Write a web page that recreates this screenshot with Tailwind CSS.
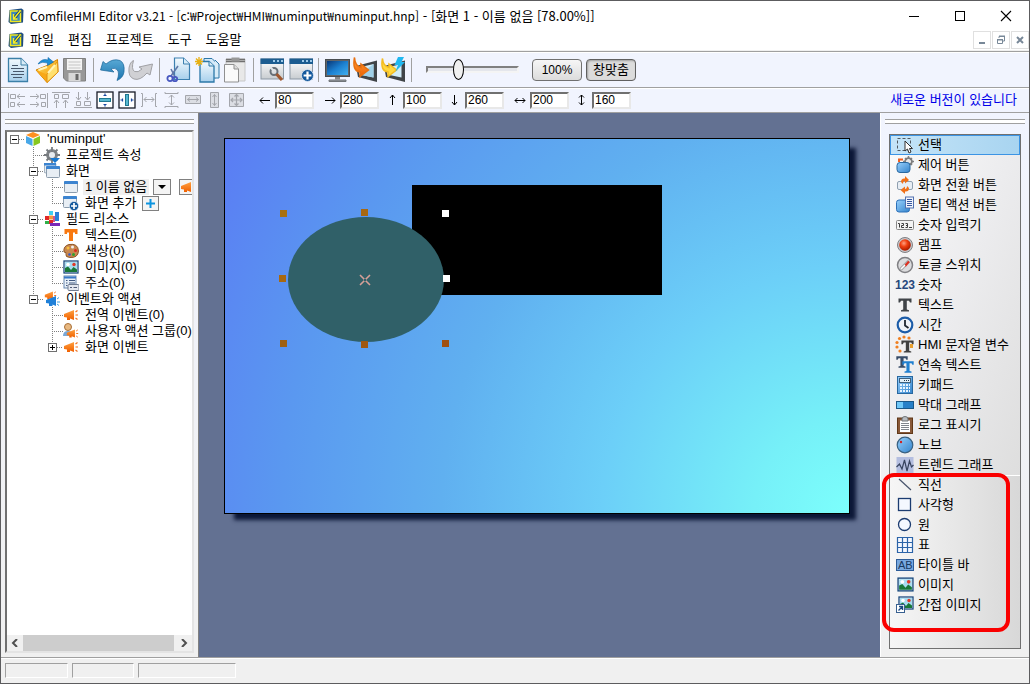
<!DOCTYPE html>
<html lang="ko">
<head>
  <meta charset="utf-8">
  <meta name="viewport" content="width=device-width, initial-scale=1">
  <title>ComfileHMI Editor v3.21</title>
  <script src="https://cdn.jsdelivr.net/npm/@tailwindcss/browser@4"></script>
</head>
<body class="h-screen overflow-hidden bg-[#f0f0f0] text-[13px] leading-4 text-black font-['Liberation_Sans','Noto_Sans_CJK_KR',sans-serif]">

<!-- shared icons -->
<svg class="absolute h-0 w-0" aria-hidden="true">
  <defs>
    <linearGradient id="g-blue" x1="0" y1="0" x2="1" y2="1"><stop offset="0" stop-color="#98d0fc"/><stop offset="1" stop-color="#3484cc"/></linearGradient>
    <linearGradient id="g-page" x1="0" y1="0" x2="0" y2="1"><stop offset="0" stop-color="#f4fafe"/><stop offset="1" stop-color="#a8d0ec"/></linearGradient>
    <linearGradient id="g-gray" x1="0" y1="0" x2="0" y2="1"><stop offset="0" stop-color="#ffffff"/><stop offset="1" stop-color="#c8ccd0"/></linearGradient>
    <linearGradient id="g-orange" x1="0" y1="0" x2="0" y2="1"><stop offset="0" stop-color="#ffa040"/><stop offset="1" stop-color="#f06000"/></linearGradient>
    <linearGradient id="g-gold" x1="0" y1="0" x2="1" y2="1"><stop offset="0" stop-color="#ffe060"/><stop offset="1" stop-color="#f09000"/></linearGradient>
    <linearGradient id="g-screen" x1="0" y1="0" x2="1" y2="1"><stop offset="0" stop-color="#083878"/><stop offset=".5" stop-color="#1c80d0"/><stop offset="1" stop-color="#40b0f0"/></linearGradient>
    <linearGradient id="g-undo" x1="0" y1="0" x2="0" y2="1"><stop offset="0" stop-color="#58a8d4"/><stop offset="1" stop-color="#1c74b0"/></linearGradient>
    <radialGradient id="g-red" cx=".4" cy=".35" r=".6"><stop offset="0" stop-color="#ffa080"/><stop offset=".5" stop-color="#f04010"/><stop offset="1" stop-color="#b02000"/></radialGradient>
  </defs>
  <symbol id="t-line" viewBox="0 0 19 16"><path d="M8.500 0V16" stroke="#808080" stroke-dasharray="1 1"/></symbol>
  <symbol id="t-tee" viewBox="0 0 19 16"><path d="M8.500 0V16M10 8.500H19" stroke="#808080" stroke-dasharray="1 1"/></symbol>
  <symbol id="t-end" viewBox="0 0 19 16"><path d="M8.500 0V8M8 8.500H19" stroke="#808080" stroke-dasharray="1 1"/></symbol>
  <symbol id="t-root" viewBox="0 0 19 16"><path d="M13 8.500H19" stroke="#808080" stroke-dasharray="1 1"/><rect x="4.500" y="4.500" width="8" height="8" fill="#fff" stroke="#707070"/><path d="M6 8.500h5" stroke="#000"/></symbol>
  <symbol id="t-minus" viewBox="0 0 19 16"><path d="M8.500 0V16M13 8.500H19" stroke="#808080" stroke-dasharray="1 1"/><rect x="4.500" y="4.500" width="8" height="8" fill="#fff" stroke="#707070"/><path d="M6 8.500h5" stroke="#000"/></symbol>
  <symbol id="t-minus-end" viewBox="0 0 19 16"><path d="M8.500 0V4M13 8.500H19" stroke="#808080" stroke-dasharray="1 1"/><rect x="4.500" y="4.500" width="8" height="8" fill="#fff" stroke="#707070"/><path d="M6 8.500h5" stroke="#000"/></symbol>
  <symbol id="t-plus-end" viewBox="0 0 19 16"><path d="M8.500 0V4M13 8.500H19" stroke="#808080" stroke-dasharray="1 1"/><rect x="4.500" y="4.500" width="8" height="8" fill="#fff" stroke="#707070"/><path d="M6 8.500h5M8.500 6v5" stroke="#000"/></symbol>

  <symbol id="i-app" viewBox="0 0 16 16">
    <path d="M1.500 2L13.500 .5L15.500 2L15 14.500L3 16L.5 14Z" fill="#1c4c80"/>
    <path d="M2.500 3H12.500V13.500H2.500Z" fill="#3c88b8" stroke="#f0e820" stroke-width="1.500"/>
    <path d="M6 10.500L12 3" stroke="#18406c" stroke-width="3"/><path d="M6 10.500L12.500 2.500M5.500 6v5h4" fill="none" stroke="#f8f020" stroke-width="1.300"/>
  </symbol>
  <symbol id="i-win" viewBox="0 0 16 16"><rect x="1.500" y="2.500" width="13" height="11" rx="1" fill="#e8eef4" stroke="#8c9cac"/><path d="M1 3q0-1 1-1h12q1 0 1 1v2H1Z" fill="#3c84d0"/></symbol>
  <symbol id="i-horn" viewBox="0 0 16 16"><path d="M1 7L11 3V13L7 11.500V13H4V10.500L1 10Z" fill="url(#g-orange)"/><path d="M12.500 5l2-1.500M12.500 8H15M12.500 11l2 1.500" stroke="#f07020" stroke-width="1.200"/></symbol>
  <symbol id="i-pic" viewBox="0 0 16 16"><rect x="1" y="2" width="14" height="12" fill="#fff" stroke="#1c4c80" stroke-width="1.300"/><rect x="2" y="3" width="12" height="10" fill="#a8dcf0"/><circle cx="11" cy="5.500" r="1.700" fill="#e03828"/><circle cx="5" cy="5.500" r="1.800" fill="#fff"/><path d="M2 13V9L5 7.500L8 11L10.500 8L14 10.500V13Z" fill="#187838"/></symbol>
  <symbol id="i-badge" viewBox="0 0 10 10"><circle cx="5" cy="5" r="4.600" fill="#14589c" stroke="#e8f0f8" stroke-width=".6"/><path d="M5 2v6M2 5h6" stroke="#fff" stroke-width="1.700"/></symbol>
  <symbol id="i-tt" viewBox="0 0 16 16"><path d="M1.500 1.500H14.500V5.500H13L12 3.800H9.800V12.500L12 13.200V14.500H4V13.200L6.200 12.500V3.800H4L3 5.500H1.500Z"/></symbol>
</svg>

<div class="flex h-full flex-col border border-[#5c5c5e]">

  <!-- title bar -->
  <header class="flex h-[29px] shrink-0 items-center bg-white pl-[7px] font-['Noto_Sans_CJK_KR',sans-serif]">
    <svg class="h-4 w-4"><use href="#i-app"/></svg>
    <h1 class="ml-1.5 whitespace-pre text-xs">ComfileHMI Editor v3.21 - [c:₩Project₩HMI₩numinput₩numinput.hnp]<span class="text-[13px]"> - [화면 1 - 이름 없음 [78.00%]]</span></h1>
    <div class="ml-auto flex">
      <button class="flex h-7 w-[46px] items-center justify-center" aria-label="최소화"><svg class="h-3 w-3" viewBox="0 0 12 12"><path d="M1 6.500H11" stroke="#000"/></svg></button>
      <button class="flex h-7 w-[46px] items-center justify-center" aria-label="최대화"><svg class="h-3 w-3" viewBox="0 0 12 12"><rect x="1.500" y="1.500" width="9" height="9" fill="none" stroke="#000"/></svg></button>
      <button class="flex h-7 w-[46px] items-center justify-center" aria-label="닫기"><svg class="h-3 w-3" viewBox="0 0 12 12"><path d="M1 1L11 11M11 1L1 11" stroke="#000" stroke-width="1.100"/></svg></button>
    </div>
  </header>

  <!-- menu -->
  <nav class="flex h-5 shrink-0 items-center bg-white pl-[7px]">
    <svg class="mr-1.5 h-4 w-4"><use href="#i-app"/></svg>
    <a href="#" class="mr-3.5">파일</a>
    <a href="#" class="mr-3.5">편집</a>
    <a href="#" class="mr-3.5">프로젝트</a>
    <a href="#" class="mr-3.5">도구</a>
    <a href="#">도움말</a>
    <div class="ml-auto flex gap-px">
      <button class="flex h-[18px] w-[18px] items-center justify-center border border-[#e0e0e0]" aria-label="창 최소화"><svg class="h-2.5 w-2.5" viewBox="0 0 10 10"><path d="M2 8H8" stroke="#788898" stroke-width="2"/></svg></button>
      <button class="flex h-[18px] w-[18px] items-center justify-center border border-[#e0e0e0]" aria-label="창 복원"><svg class="h-2.5 w-2.5" viewBox="0 0 10 10" fill="none" stroke="#788898"><path d="M3 3V1.500H9M3 1H9M8.500 1V6H7M1.500 4V8.500H6.500V4M1 4.500H7M1 5H7"/></svg></button>
      <button class="flex h-[18px] w-[18px] items-center justify-center border border-[#e0e0e0]" aria-label="창 닫기"><svg class="h-2.5 w-2.5" viewBox="0 0 10 10"><path d="M2 2L8 8M8 2L2 8" stroke="#788898" stroke-width="2"/></svg></button>
    </div>
  </nav>

  <!-- main toolbar -->
  <div class="mt-px flex h-9 shrink-0 items-center border-t border-[#a0a0a0] bg-[#f1f4fe] pl-1.5 shadow-[inset_0_1px_0_#fff]">
    <button class="mr-[3px]" aria-label="새로 만들기"><svg class="h-[26px] w-[25px]" viewBox="0 0 25 26"><path d="M1.500 1.500H14L20.500 8V24.500H1.500Z" fill="url(#g-page)" stroke="#3c80a8" stroke-width="1.300"/><path d="M14 1.500V8H20.500" fill="#d8ecf8" stroke="#3c80a8"/><path d="M5 8.500h6M4 11.500h13M6 14.500h11M4 17.500h13M6 20.500h9" stroke="#48586c" stroke-width="1.200"/></svg></button>
    <button class="mr-[3px]" aria-label="열기"><svg class="h-[26px] w-[25px]" viewBox="0 0 25 26"><path d="M1 13L12 8.500L22.500 2.500L23 15L12 25.500Z" fill="url(#g-gold)" stroke="#d08000"/><path d="M1 13L12 17.500L12 25.500Z" fill="#f8a818"/><path d="M12 17.500L22.500 4.500L23 15L12 25.500Z" fill="#ffe070" stroke="#e09010"/><path d="M13 16L20 8M3.500 13l8.500-3" stroke="#fff4b8" stroke-width="2"/><path d="M3 7Q7 1 13 3L13 .5L18.500 5L12.500 8.500L12.500 6Q7 4 3 7Z" fill="#1c90d8" stroke="#1068a8" stroke-width=".6"/></svg></button>
    <button class="mr-[5px]" aria-label="저장"><svg class="h-[26px] w-[25px]" viewBox="0 0 25 26"><path d="M.5 1.500H22.500V24H3.500L.5 21Z" fill="#989898" stroke="#808080"/><rect x="4" y="2" width="15" height="11" fill="#f4f4f4"/><path d="M5.500 5h12M5.500 8h12M5.500 11h12" stroke="#c4c4c4"/><rect x="5.500" y="16" width="12" height="8" fill="#d8d8d8"/><rect x="12.500" y="17" width="3" height="6" fill="#686868"/></svg></button>
    <span class="mr-1.5 h-6 w-px bg-[#a0a0a0]"></span>
    <button class="mr-[3px]" aria-label="실행 취소"><svg class="h-[26px] w-[25px]" viewBox="0 0 25 26"><path d="M.5 13L3 4.500L6 7Q13 1 20 3.500Q25 6 24 15Q23 21 17 23.500Q20 16 17 12.500Q14.500 10.500 11 12L14 15Z" fill="url(#g-undo)" stroke="#186498" stroke-width=".7"/></svg></button>
    <button class="mr-1.5" aria-label="다시 실행"><svg class="h-[26px] w-[25px]" viewBox="0 0 25 26"><path d="M24.500 7L22 18L19 16Q12 24 6 22Q0 20 1 11Q2 5 5.500 3.500Q3 12 6.500 14.500Q10 16 14 12L11 10Z" fill="#d0d0d4" stroke="#a0a0a4"/></svg></button>
    <span class="mr-1.5 h-6 w-px bg-[#a0a0a0]"></span>
    <button class="mr-1" aria-label="잘라내기"><svg class="h-[26px] w-[25px]" viewBox="0 0 25 26"><path d="M8.500 1H17.500L23.500 7V22.500H8.500Z" fill="url(#g-page)" stroke="#3c80b0" stroke-width="1.200"/><path d="M17.500 1V7H23.500" fill="#d8ecf8" stroke="#3c80b0"/><path d="M12 9L5 19M5 12L9 20" stroke="#6078a8" stroke-width="1.600"/><circle cx="4" cy="21.500" r="2.600" fill="none" stroke="#4858c0" stroke-width="1.800"/><circle cx="9" cy="22" r="2.200" fill="none" stroke="#4858c0" stroke-width="1.800"/></svg></button>
    <button class="mr-1" aria-label="복사"><svg class="h-[26px] w-[25px]" viewBox="0 0 25 26"><path d="M9 1.500H17L20.500 5V21H9Z" fill="#d4eafa" stroke="#2c78a8"/><path d="M20 3l4 4V21H20" fill="#d8ecf8" stroke="#2c78a8"/><path d="M5 4.500H14L19 9V25H5Z" fill="url(#g-page)" stroke="#2c78a8" stroke-width="1.300"/><path d="M14 4.500V9H19" fill="#d8ecf8" stroke="#2c78a8"/><path d="M4 0V9M0 4.500H8M1 1.500L7 7.500M7 1.500L1 7.500" stroke="#e8b010" stroke-width="1.300"/></svg></button>
    <button class="mr-1" aria-label="붙여넣기"><svg class="h-[26px] w-[25px]" viewBox="0 0 25 26"><path d="M2 2H21V24H2Z" fill="#e8e8e8" stroke="#c8c8c8"/><path d="M2 2.500H21M2 4.500H21" stroke="#707070" stroke-width="1.500"/><rect x="7.500" y=".5" width="8" height="4" fill="#989898"/><path d="M.5 7.500H10L14.500 12V25H.5Z" fill="#fafafa" stroke="#909090"/><path d="M10 7.500V12H14.500" fill="#ddd" stroke="#909090"/></svg></button>
    <span class="mr-1.5 h-6 w-px bg-[#a0a0a0]"></span>
    <button class="mr-1" aria-label="화면 설정"><svg class="h-[26px] w-[25px]" viewBox="0 0 25 26"><rect x="1" y="2" width="22.500" height="20" fill="url(#g-gray)" stroke="#8c98a4"/><rect x=".5" y="1.500" width="23.500" height="5.500" fill="#1c5c90"/><path d="M13 3h2v2h-2zM17 3h2v2h-2zM21 3h2v2h-2z" fill="#9cc8e8"/><circle cx="14" cy="14.500" r="3.500" fill="none" stroke="#687078" stroke-width="2"/><path d="M10 10l4 4" stroke="#e0e4e8" stroke-width="2"/><path d="M16.500 17L22 23" stroke="#a05830" stroke-width="3.200"/></svg></button>
    <button class="mr-1" aria-label="화면 추가"><svg class="h-[26px] w-[25px]" viewBox="0 0 25 26"><rect x="1" y="2" width="22.500" height="20" fill="url(#g-gray)" stroke="#8c98a4"/><rect x=".5" y="1.500" width="23.500" height="5.500" fill="#1c5c90"/><path d="M13 3h2v2h-2zM17 3h2v2h-2zM21 3h2v2h-2z" fill="#9cc8e8"/><use href="#i-badge" x="12" y="12" width="13" height="13"/></svg></button>
    <span class="mr-1.5 h-6 w-px bg-[#a0a0a0]"></span>
    <button class="mr-[3px]" aria-label="시뮬레이션"><svg class="h-[26px] w-[25px]" viewBox="0 0 25 26"><rect x=".5" y="2.500" width="24" height="17" fill="#606468" stroke="#484c50"/><rect x="2" y="4" width="21" height="14" fill="url(#g-screen)"/><path d="M10 20h5v2.500H10z" fill="#888"/><path d="M4 23h17v1.500H4z" fill="#989ca0" stroke="#707478"/></svg></button>
    <button class="mr-[3px]" aria-label="빌드"><svg class="h-[26px] w-[25px]" viewBox="0 0 25 26"><path d="M3 9L24 3.500V25L5 20Z" fill="#404448"/><path d="M6 10.500L20.500 7V20.500L6 17.500Z" fill="#d0ecf8"/><path d="M6 17.500L18 9L20.500 7V20.500Z" fill="#a0d0e8"/><path d="M1.500 .5Q-1 14 7 15V19.500L15.500 13L8 7V10.500Q2 9 1.500 .5Z" fill="url(#g-orange)" stroke="#e87010" stroke-width="1.500"/></svg></button>
    <button class="mr-[5px]" aria-label="다운로드"><svg class="h-[26px] w-[25px]" viewBox="0 0 25 26"><path d="M3 9L24 3.500V25L5 20Z" fill="#404448"/><path d="M6 10.500L20.500 7V20.500L6 17.500Z" fill="#d0ecf8"/><path d="M1.500 1.500Q-1 14 7 15V19.500L15.500 13L8 7V10.500Q2 9 1.500 1.500Z" fill="#ffd840" stroke="#f4bc20" stroke-width="1.500"/><path d="M17 0H23L20.500 5H24L14.500 14.500L17 8H13.500Z" fill="#20b8f0"/></svg></button>
    <span class="mr-3.5 h-6 w-px bg-[#a0a0a0]"></span>
    <label class="relative flex h-6 w-[93px] items-center" aria-label="확대">
      <span class="h-[7px] w-full border-2 border-[#f4f4f4] border-t-[#808080] border-l-[#808080] bg-[#e4e6ec]"></span>
      <input type="range" value="33" class="absolute inset-0 h-full w-full appearance-none bg-transparent [&::-webkit-slider-thumb]:h-[21px] [&::-webkit-slider-thumb]:w-[11px] [&::-webkit-slider-thumb]:appearance-none [&::-webkit-slider-thumb]:rounded-[50%] [&::-webkit-slider-thumb]:border [&::-webkit-slider-thumb]:border-black [&::-webkit-slider-thumb]:bg-[#f0f0f0]">
    </label>
    <button class="ml-[13px] h-[22px] w-[50px] rounded-sm border border-[#707070] bg-linear-to-b from-[#f6f6f6] to-[#dcdcdc] text-xs leading-5">100%</button>
    <button class="ml-1 h-[22px] w-[50px] rounded-sm border border-[#606060] bg-[#dcdcdc] text-[13px] leading-5 shadow-[inset_1px_1px_2px_#a0a0a0]">창맞춤</button>
  </div>

  <!-- align toolbar -->
  <div class="flex h-[25px] shrink-0 items-center border-t border-[#a0a0a0] bg-[#f1f4fe] pl-[7px] shadow-[inset_0_1px_0_#fff]">
    <div class="flex gap-1 text-[#a4a6ac]">
      <button aria-label="왼쪽 맞춤"><svg class="h-[18px] w-[18px]" viewBox="0 0 18 18" fill="none" stroke="currentColor"><path d="M.5 2V17M9 5.500H17M12 3L9 5.500L12 8M9 13.500H17M12 11L9 13.500L12 16"/><path d="M2.500 3.500h5v4h-5zM2.500 11.500h4v4h-4z"/></svg></button>
      <button aria-label="오른쪽 맞춤"><svg class="h-[18px] w-[18px]" viewBox="0 0 18 18" fill="none" stroke="currentColor"><path d="M17.500 2V17M0 5.500H8M6 3L9 5.500L6 8M0 13.500H8M6 11L9 13.500L6 16"/><path d="M10.500 3.500h5v4h-5zM11.500 11.500h4v4h-4z"/></svg></button>
      <button aria-label="위쪽 맞춤"><svg class="h-[18px] w-[18px]" viewBox="0 0 18 18" fill="none" stroke="currentColor"><path d="M0 1.500H18M4.500 9V17M2 12L4.500 9L7 12M13.500 9V17M11 12L13.500 9L16 12"/><path d="M2.500 3.500h4v4h-4zM10.500 3.500h6v4h-6z"/></svg></button>
      <button aria-label="아래쪽 맞춤"><svg class="h-[18px] w-[18px]" viewBox="0 0 18 18" fill="none" stroke="currentColor"><path d="M0 16.500H18M4.500 1V9M2 6L4.500 9L7 6M13.500 1V9M11 6L13.500 9L16 6"/><path d="M2.500 10.500h4v4h-4zM10.500 10.500h6v4h-6z"/></svg></button>
      <button aria-label="세로 가운데"><svg class="h-[18px] w-[18px]" viewBox="0 0 18 18"><rect x="1" y="1" width="16" height="16" fill="#fff" stroke="#181c28" stroke-width="1.300"/><rect x="3.500" y="7.500" width="11" height="3" fill="#58b8d0" stroke="#207890"/><path d="M9 2.500V5M9 13V15.500M7.500 4.500h3M7.500 13.500h3" stroke="#1848a0" stroke-width="1.200"/></svg></button>
      <button aria-label="가로 가운데"><svg class="h-[18px] w-[18px]" viewBox="0 0 18 18"><rect x="1" y="1" width="16" height="16" fill="#fff" stroke="#181c28" stroke-width="1.300"/><rect x="7.500" y="3.500" width="3" height="11" fill="#58b8d0" stroke="#207890"/><path d="M2.500 9H5M13 9H15.500M4.500 7.500v3M13.500 7.500v3" stroke="#1848a0" stroke-width="1.200"/></svg></button>
      <button aria-label="가로 간격"><svg class="h-[18px] w-[18px]" viewBox="0 0 18 18" fill="none" stroke="currentColor"><path d="M1 2.500H2.500V15.500H1M17 2.500H15.500V15.500H17M4 8.500H14M6.500 6L4 8.500L6.500 11M11.500 6L14 8.500L11.500 11"/></svg></button>
      <button aria-label="세로 간격"><svg class="h-[18px] w-[18px]" viewBox="0 0 18 18" fill="none" stroke="currentColor"><path d="M3 1V2.500H16V1M3 17V15.500H16V17M9.500 4V14M7 6.500L9.500 4L12 6.500M7 11.500L9.500 14L12 11.500"/></svg></button>
      <button aria-label="같은 너비"><svg class="h-[18px] w-[18px]" viewBox="0 0 18 18" fill="none" stroke="currentColor"><path d="M1.500 4.500H16.500V12.500H1.500Z" fill="#dcdee4"/><path d="M3.500 8.500H14.500M6 6.500L3.500 8.500L6 10.500M12 6.500L14.500 8.500L12 10.500"/></svg></button>
      <button aria-label="같은 높이"><svg class="h-[18px] w-[18px]" viewBox="0 0 18 18" fill="none" stroke="currentColor"><path d="M4.500 1.500H12.500V16.500H4.500Z" fill="#dcdee4"/><path d="M8.500 3.500V14.500M6.500 6L8.500 3.500L10.500 6M6.500 12L8.500 14.500L10.500 12"/></svg></button>
      <button aria-label="같은 크기"><svg class="h-[18px] w-[18px]" viewBox="0 0 18 18" fill="none" stroke="currentColor"><path d="M1.500 2.500H15.500V15.500H1.500Z" fill="#dcdee4"/><path d="M8.500 3.500V14.500M3 9H14M6.500 5.500L8.500 3.500L10.500 5.500M6.500 12.500L8.500 14.500L10.500 12.500M5 7L3 9L5 11M12 7L14 9L12 11" stroke-width="1.200"/></svg></button>
    </div>
    <div class="ml-[13px] flex text-xs">
      <label class="flex w-[65px] items-center gap-1"><svg class="h-3 w-3" viewBox="0 0 12 12" fill="none" stroke="#000"><path d="M1 6.500H11M4 3.500L1 6.500L4 9.500"/></svg><input value="80" aria-label="X" class="h-[17px] w-[39px] border-2 border-[#e8e8e8] border-t-[#707070] border-l-[#707070] bg-white px-px"></label>
      <label class="flex w-[63px] items-center gap-1"><svg class="h-3 w-3" viewBox="0 0 12 12" fill="none" stroke="#000"><path d="M1 6.500H11M8 3.500L11 6.500L8 9.500"/></svg><input value="280" aria-label="X2" class="h-[17px] w-[39px] border-2 border-[#e8e8e8] border-t-[#707070] border-l-[#707070] bg-white px-px"></label>
      <label class="flex w-[62px] items-center gap-1"><svg class="h-3 w-3" viewBox="0 0 12 12" fill="none" stroke="#000"><path d="M5.500 1V11M3 4L5.500 1L8 4"/></svg><input value="100" aria-label="Y" class="h-[17px] w-[39px] border-2 border-[#e8e8e8] border-t-[#707070] border-l-[#707070] bg-white px-px"></label>
      <label class="flex w-[65px] items-center gap-1"><svg class="h-3 w-3" viewBox="0 0 12 12" fill="none" stroke="#000"><path d="M5.500 1V11M3 8L5.500 11L8 8"/></svg><input value="260" aria-label="Y2" class="h-[17px] w-[39px] border-2 border-[#e8e8e8] border-t-[#707070] border-l-[#707070] bg-white px-px"></label>
      <label class="flex w-[62px] items-center gap-1"><svg class="h-3 w-3" viewBox="0 0 12 12" fill="none" stroke="#000"><path d="M1 6.500H11M3.500 4L1 6.500L3.500 9M8.500 4L11 6.500L8.500 9"/></svg><input value="200" aria-label="너비" class="h-[17px] w-[39px] border-2 border-[#e8e8e8] border-t-[#707070] border-l-[#707070] bg-white px-px"></label>
      <label class="flex items-center gap-1"><svg class="h-3 w-3" viewBox="0 0 12 12" fill="none" stroke="#000"><path d="M5.500 1V11M3 3.500L5.500 1L8 3.500M3 8.500L5.500 11L8 8.500"/></svg><input value="160" aria-label="높이" class="h-[17px] w-[39px] border-2 border-[#e8e8e8] border-t-[#707070] border-l-[#707070] bg-white px-px"></label>
    </div>
    <a href="#" class="mr-3 ml-auto text-[#0000e8]">새로운 버전이 있습니다</a>
  </div>

  <main class="flex min-h-0 flex-1 border-t border-[#a0a0a0]">

    <!-- project tree -->
    <aside class="flex w-[198px] shrink-0 flex-col border-r border-[#808080] bg-linear-to-b from-[#f1f4fe] to-[#f0f0f0] px-1 pt-1.5 pb-1">
      <div class="h-[5px] shrink-0 border-y border-[#a0a0a0] bg-white"></div>
      <div class="mt-1.5 flex min-h-0 flex-1 flex-col overflow-hidden border-2 border-[#e4e4e4] border-t-[#808080] border-l-[#707070] bg-white">
        <ul class="-mt-px -ml-px flex-1 whitespace-nowrap [&>li]:flex [&>li]:h-4 [&>li]:items-center [&>li>svg]:h-4 [&>li>svg]:shrink-0 [&_.g]:w-[19px] [&_.i]:mr-1.5 [&_.i]:w-4">
          <li><svg class="g"><use href="#t-root"/></svg><svg class="i" viewBox="0 0 16 16"><path d="M8 1L15 4L8 7L1 4Z" fill="#ff9020"/><path d="M1 5L7.500 8V15L1 12Z" fill="#48a8e8"/><path d="M15 5L8.500 8V15L15 12Z" fill="#88c820"/></svg><span>'numinput'</span></li>
          <li><svg class="g"></svg><svg class="g"><use href="#t-tee"/></svg><svg class="i" viewBox="0 0 16 16"><circle cx="8" cy="8" r="4.500" fill="none" stroke="#808488" stroke-width="3"/><path d="M8 0V16M0 8H16M2.500 2.500L13.500 13.500M13.500 2.500L2.500 13.500" stroke="#787c80" stroke-width="1.800"/><circle cx="8" cy="8" r="3" fill="#e8ecf0"/><path d="M6 11h10l-5 5z" fill="#1878d0"/></svg><span>프로젝트 속성</span></li>
          <li><svg class="g"></svg><svg class="g"><use href="#t-minus"/></svg><svg class="i" viewBox="0 0 16 16"><use href="#i-win" x="-1" y="-2" width="14" height="14"/><use href="#i-win" x="1" y="1" width="16" height="16"/></svg><span>화면</span></li>
          <li><svg class="g"></svg><svg class="g"><use href="#t-line"/></svg><svg class="g"><use href="#t-tee"/></svg><svg class="i"><use href="#i-win"/></svg><span class="-ml-0.5 bg-[#f0f0f0] px-0.5">1 이름 없음</span><button class="ml-1 flex h-4 w-[18px] shrink-0 items-center justify-center border border-[#808080] bg-[#f4f4f4]" aria-label="화면 선택"><svg class="h-2 w-2" viewBox="0 0 8 8"><path d="M0 2H8L4 6Z"/></svg></button><button class="ml-2 flex h-4 w-6 shrink-0 items-center border border-[#808080] bg-[#f4f4f4]" aria-label="화면 이벤트"><svg class="h-4 w-4"><use href="#i-horn"/></svg></button></li>
          <li><svg class="g"></svg><svg class="g"><use href="#t-line"/></svg><svg class="g"><use href="#t-end"/></svg><svg class="i" viewBox="0 0 16 16"><use href="#i-win" x="-1" y="-1" width="16" height="16"/><use href="#i-badge" x="6" y="6" width="10" height="10"/></svg><span>화면 추가</span><button class="ml-1.5 flex h-[15px] w-[17px] shrink-0 items-center justify-center border border-[#808080] bg-[#f4f4f4]" aria-label="추가"><svg class="h-[9px] w-[9px]" viewBox="0 0 9 9"><path d="M4.500 0V9M0 4.500H9" stroke="#0c94e0" stroke-width="2"/></svg></button></li>
          <li><svg class="g"></svg><svg class="g"><use href="#t-minus"/></svg><svg class="i" viewBox="0 0 16 16"><path d="M1 5h4v4H1zM5 9h4v4H5z" fill="#e02828"/><path d="M5 0h4v4H5z" fill="#40d0f0"/><path d="M1 10h4v3H1z" fill="#30b048"/><path d="M5 4.500h4v4H5z" fill="#f09840"/><path d="M11 1h4v9h-4z" fill="#2880d8"/><path d="M9 5h2v6H9z" fill="#d05890"/><path d="M6 12h10v3H6z" fill="#7828b8"/></svg><span>필드 리소스</span></li>
          <li><svg class="g"></svg><svg class="g"><use href="#t-line"/></svg><svg class="g"><use href="#t-tee"/></svg><svg class="i" viewBox="0 0 16 16"><path d="M1.500 2H14.500V7H12V5.500H10V14H6V5.500H4V7H1.500Z" fill="#f87810"/></svg><span>텍스트(0)</span></li>
          <li><svg class="g"></svg><svg class="g"><use href="#t-line"/></svg><svg class="g"><use href="#t-tee"/></svg><svg class="i" viewBox="0 0 16 16"><path d="M1 9Q0 3 6 1.500Q15 0 15.500 8Q15 15 7 14.500Q2 14 3 11.500Q4 9 1 9Z" fill="#c88850" stroke="#905828"/><circle cx="5" cy="5" r="1.500" fill="#f8c040"/><circle cx="9.500" cy="4" r="1.500" fill="#f0f0f0"/><circle cx="12.500" cy="7.500" r="1.500" fill="#e02820"/><circle cx="10.500" cy="11.500" r="1.500" fill="#30a030"/><circle cx="6.500" cy="11.500" r="1.300" fill="#3858c8"/></svg><span>색상(0)</span></li>
          <li><svg class="g"></svg><svg class="g"><use href="#t-line"/></svg><svg class="g"><use href="#t-tee"/></svg><svg class="i"><use href="#i-pic"/></svg><span>이미지(0)</span></li>
          <li><svg class="g"></svg><svg class="g"><use href="#t-line"/></svg><svg class="g"><use href="#t-end"/></svg><svg class="i" viewBox="0 0 16 16"><rect x="1" y="1" width="12" height="12" fill="#e8f0f8" stroke="#6888b0"/><path d="M1 2.500H13" stroke="#3878c8" stroke-width="2"/><path d="M3 5.500h1.500M6 5.500h6M3 8h1.500M6 8h6M3 10.500h1.500" stroke="#405880"/><rect x="5" y="9.500" width="11" height="6" rx="1" fill="#e4e8f0" stroke="#707c90"/><path d="M7 12.500h2M10.500 12.500h3.500" stroke="#505c78"/></svg><span>주소(0)</span></li>
          <li><svg class="g"></svg><svg class="g"><use href="#t-minus-end"/></svg><svg class="i" viewBox="0 0 16 16"><use href="#i-horn" x="-1" y="-2" width="15" height="13"/><path d="M2 9L12 5V15L8.500 13.500V15H5V12.500L2 12Z" fill="#2080d8"/><path d="M13 8l2-1.500M13 11H16M13 13l2 1.500" stroke="#40a0e0"/></svg><span>이벤트와 액션</span></li>
          <li><svg class="g"></svg><svg class="g"></svg><svg class="g"><use href="#t-tee"/></svg><svg class="i"><use href="#i-horn"/></svg><span>전역 이벤트(0)</span></li>
          <li><svg class="g"></svg><svg class="g"></svg><svg class="g"><use href="#t-tee"/></svg><svg class="i" viewBox="0 0 16 16"><circle cx="5" cy="4" r="3.500" fill="#e8b880" stroke="#a87038"/><path d="M0 13Q0 8 5 8T10 13Z" fill="#78a8d8"/><use href="#i-horn" x="3" y="4" width="13" height="13"/></svg><span>사용자 액션 그룹(0)</span></li>
          <li><svg class="g"></svg><svg class="g"></svg><svg class="g"><use href="#t-plus-end"/></svg><svg class="i"><use href="#i-horn"/></svg><span>화면 이벤트</span></li>
        </ul>
        <div class="flex h-4 shrink-0 bg-[#f0f0f0]">
          <button class="flex w-4 items-center justify-center" aria-label="왼쪽"><svg class="h-2 w-2" viewBox="0 0 8 8"><path d="M6 0L2 4L6 8" fill="none" stroke="#505050" stroke-width="2"/></svg></button>
          <div class="flex-1"><div class="h-full bg-[#cdcdcd]"></div></div>
          <button class="ml-0.5 flex w-4 items-center justify-center" aria-label="오른쪽"><svg class="h-2 w-2" viewBox="0 0 8 8"><path d="M2 0L6 4L2 8" fill="none" stroke="#505050" stroke-width="2"/></svg></button>
        </div>
      </div>
    </aside>

    <!-- design surface: items sit at their own coordinates -->
    <section class="relative min-w-0 flex-1 overflow-hidden bg-[#637192]">
      <div class="absolute top-[25px] left-[25px] h-[376px] w-[626px] border border-black bg-[radial-gradient(circle_at_100%_100%,#7cfffc_0%,#76f0f8_13%,#6ccff8_34%,#60b0f0_56%,#5a98f0_78%,#5a7cf4_100%)] shadow-[8px_8px_4px_-2px_#0c1838]">
        <div class="absolute top-[46px] left-[187px] h-[110px] w-[250px] bg-black"></div>
        <div class="absolute top-[78px] left-[63px] h-[125px] w-[156px] rounded-[50%] bg-[#306068]"></div>
        <svg class="absolute top-[135px] left-[134px] h-3 w-3" viewBox="0 0 12 12"><path d="M1 1L11 11M11 1L1 11" stroke="#d8a098" stroke-width="1.600"/><path d="M5 6h2" stroke="#306068" stroke-width="2"/></svg>
        <span class="absolute top-[71px] left-[55px] h-[7px] w-[7px] bg-[#a87010]"></span>
        <span class="absolute top-[70px] left-[136px] h-[7px] w-[7px] bg-[#a86810]"></span>
        <span class="absolute top-[71px] left-[217px] h-[7px] w-[7px] bg-white"></span>
        <span class="absolute top-[136px] left-[54px] h-[7px] w-[7px] bg-[#a86810]"></span>
        <span class="absolute top-[136px] left-[218px] h-[7px] w-[7px] bg-white"></span>
        <span class="absolute top-[201px] left-[55px] h-[7px] w-[7px] bg-[#a06010]"></span>
        <span class="absolute top-[202px] left-[136px] h-[7px] w-[7px] bg-[#a05810]"></span>
        <span class="absolute top-[201px] left-[217px] h-[7px] w-[7px] bg-[#a05010]"></span>
      </div>
    </section>

    <!-- toolbox -->
    <aside class="relative flex w-[149px] shrink-0 flex-col border-l border-white bg-linear-to-b from-[#f1f4fe] to-[#f0f0f0] pt-1.5 pr-1 pb-2 pl-1">
      <div class="h-[5px] shrink-0 border-y border-[#a0a0a0] bg-white"></div>
      <div class="mt-2.5 mr-1 ml-1 flex flex-1 flex-col border border-[#707070] bg-linear-to-r from-[#f6f6f6] to-[#d8d8d8]">
        <ul class="bg-linear-to-br from-[#fafafa] via-[#ececee] to-[#dedede] [&_button]:flex [&_button]:h-5 [&_button]:w-full [&_button]:items-center [&_button]:gap-1 [&_button]:pl-1.5 [&_button]:whitespace-nowrap [&_svg]:h-[18px] [&_svg]:w-[18px] [&_svg]:shrink-0">
          <li><button class="border border-[#3c94e4] bg-linear-to-r from-[#c4e4f8] to-[#a8d4f0] !pl-[5px]"><svg viewBox="0 0 18 18"><rect x="1.500" y="2.500" width="13" height="12" fill="none" stroke="#505860" stroke-dasharray="3 2"/><path d="M9 5V15L11.500 13L13 17L15 16L13.500 12.500H16.500Z" fill="#fff" stroke="#303030"/></svg>선택</button></li>
          <li><button><svg viewBox="0 0 18 18"><circle cx="12.500" cy="5.500" r="3.500" fill="#e8e8e8" stroke="#787878" stroke-width="1.600"/><path d="M12.500 0v3M12.500 8v3M7 5.500h3M15 5.500h3M9 2l2 2M16 2l-2 2M16 9l-2-2" stroke="#808080" stroke-width="1.500"/><path d="M3 6V3.500H7" fill="none" stroke="#f06020" stroke-width="2"/><rect x="1" y="6.500" width="13" height="10" rx="3" fill="url(#g-blue)" stroke="#2868a0"/></svg>제어 버튼</button></li>
          <li><button><svg viewBox="0 0 18 18"><rect x="1.500" y="5.500" width="15" height="8" rx="1.500" fill="#e8eef4" stroke="#90a0b0"/><path d="M5 6Q5 2 9 2.500V0L13 4L9 7.500V5Q7 5 7 8Z" fill="#f07018"/><path d="M13 12Q13 16 9 15.500V18L4.500 14L9 10.500V13Q11 13 11 10Z" fill="#f07018"/></svg>화면 전환 버튼</button></li>
          <li><button><svg viewBox="0 0 18 18"><rect x=".5" y="4" width="13" height="12" rx="2.500" fill="url(#g-blue)" stroke="#2c70b8"/><rect x="9.500" y="1" width="8" height="11" fill="#f0f4fc" stroke="#5070b0"/><path d="M11 3.500h5M11 5.500h5M11 7.500h5M11 9.500h5" stroke="#3858a0"/></svg>멀티 액션 버튼</button></li>
          <li><button><svg viewBox="0 0 18 18"><rect x=".5" y="4.500" width="17" height="9" rx="1" fill="#f4f4f4" stroke="#888"/><path d="M2 7.500h1.500v4M5.500 7.500h2v2h-2v2h2.500M9.500 7.500h2v4h-2M10 9.500h1.500M13 11.500h3" fill="none" stroke="#404040"/></svg>숫자 입력기</button></li>
          <li><button><svg viewBox="0 0 18 18"><circle cx="9" cy="9" r="7.500" fill="#c8c8cc" stroke="#808084"/><circle cx="9" cy="9" r="5.800" fill="url(#g-red)"/></svg>램프</button></li>
          <li><button><svg viewBox="0 0 18 18"><circle cx="9" cy="9" r="7.500" fill="#dcdcde" stroke="#808084" stroke-width="1.500"/><path d="M4.500 13.500L13 5" stroke="#aaa" stroke-width="3.500"/><path d="M9 10L13 5.500" stroke="#e03020" stroke-width="2"/><path d="M5 13L9 9" stroke="#fff" stroke-width="1.500"/></svg>토글 스위치</button></li>
          <li><button><svg viewBox="0 0 18 18" class="overflow-visible"><text x="-1" y="13" class="fill-[#28487c] font-['Liberation_Sans',sans-serif] text-[12px] font-bold">123</text></svg>숫자</button></li>
          <li><button><svg viewBox="-1 -1 18 18" fill="#404448"><use href="#i-tt" width="16" height="16"/></svg>텍스트</button></li>
          <li><button><svg viewBox="0 0 18 18"><circle cx="9" cy="9" r="7.300" fill="#f0f4f8" stroke="#1c5ca8" stroke-width="2.200"/><path d="M9 4V9.500L12.500 12" fill="none" stroke="#202830" stroke-width="1.800"/></svg>시간</button></li>
          <li><button><svg viewBox="0 0 18 18" class="overflow-visible"><g fill="#f08020"><circle cx="8" cy="1" r="1.600"/><circle cx="3.500" cy="2.500" r="1.600"/><circle cx="1" cy="6.500" r="1.600"/><circle cx="1" cy="11" r="1.600"/><circle cx="4" cy="15" r="1.600"/><circle cx="13" cy="2" r="1.600"/></g><g fill="#404040"><use href="#i-tt" x="4" y="3" width="15" height="15"/></g><path d="M14 8h3v4h-3z" fill="#e8a030"/></svg>HMI 문자열 변수</button></li>
          <li><button><svg viewBox="0 0 18 18"><g fill="#384c68"><use href="#i-tt" x="-1" y="-1" width="14" height="14"/></g><g fill="#2080d0"><use href="#i-tt" x="5" y="4" width="14" height="14"/></g></svg>연속 텍스트</button></li>
          <li><button><svg viewBox="0 0 18 18"><rect x="1.500" y=".5" width="15" height="17" fill="url(#g-blue)" stroke="#2868a0"/><rect x="3.500" y="2.500" width="11" height="4" fill="#e4f0f8" stroke="#40607c"/><path d="M8 4.500h1M10 4.500h1M12 4.500h1" stroke="#203850"/><path d="M4 9h10M4 12h10M4 15h10" stroke="#e8f4ff" stroke-width="2" stroke-dasharray="2 1"/></svg>키패드</button></li>
          <li><button><svg viewBox="0 0 18 18"><rect x=".5" y="5.500" width="17" height="7" fill="#2880c8" stroke="#1c5888"/><rect x="1" y="6" width="6" height="6" fill="#70c8f8"/></svg>막대 그래프</button></li>
          <li><button><svg viewBox="0 0 18 18"><rect x="1.500" y="2" width="15" height="15.500" fill="#885838" stroke="#603818"/><rect x="4" y="4.500" width="10" height="11.500" fill="#fff"/><path d="M6 3Q6 .5 9 .5T12 3V5H6Z" fill="#b8bcc0" stroke="#707478"/><path d="M5 7.500h8M5 9.500h8M5 11.500h8M5 13.500h8" stroke="#80858c"/></svg>로그 표시기</button></li>
          <li><button><svg viewBox="0 0 18 18"><circle cx="9" cy="9" r="7.800" fill="url(#g-blue)" stroke="#386080" stroke-width="1.200"/><circle cx="5" cy="6" r="1.200" fill="#d02020"/></svg>노브</button></li>
          <li><button><svg viewBox="0 0 18 18"><rect x=".5" y="1" width="17" height="16" fill="#b4bee0"/><path d="M.5 11L3.500 8L6 13L8.500 4L11 15L13.500 5L15.500 11L17.500 9" fill="none" stroke="#384460" stroke-width="1.200"/></svg>트렌드 그래프</button></li>
        </ul>
        <ul class="shadow-[inset_0_1px_0_#fff] [&_button]:flex [&_button]:h-5 [&_button]:w-full [&_button]:items-center [&_button]:gap-1 [&_button]:pl-1.5 [&_button]:whitespace-nowrap [&_svg]:h-[18px] [&_svg]:w-[18px] [&_svg]:shrink-0">
          <li><button><svg viewBox="0 0 18 18"><path d="M3 3L15 14" stroke="#48546c" stroke-width="1.200"/></svg>직선</button></li>
          <li><button><svg viewBox="0 0 18 18"><rect x="2.500" y="2.500" width="12" height="12" fill="#f4f8ff" stroke="#1c3c70" stroke-width="1.300"/></svg>사각형</button></li>
          <li><button><svg viewBox="0 0 18 18"><circle cx="8.500" cy="8.500" r="6" fill="#f4f8ff" stroke="#1c3c70" stroke-width="1.300"/></svg>원</button></li>
          <li><button><svg viewBox="0 0 18 18"><path d="M1.500 1.500h15v15h-15zM6.500 1.500v15M11.500 1.500v15M1.500 6.500h15M1.500 11.500h15" fill="#f4f8ff" stroke="#2c64a8" stroke-width="1.200"/></svg>표</button></li>
          <li><button><svg viewBox="0 0 18 18"><rect x=".5" y="3.500" width="17" height="11" fill="#78a8e0" stroke="#2c5c98"/><text x="2" y="13" class="fill-[#183860] font-['Liberation_Sans',sans-serif] text-[11px]">AB</text></svg>타이틀 바</button></li>
          <li><button><svg viewBox="0 0 18 18"><use href="#i-pic" x="1" y="0" width="17" height="17"/></svg>이미지</button></li>
          <li><button><svg viewBox="0 0 18 18"><use href="#i-pic" x="2" y="-1" width="16" height="16"/><rect x=".5" y="8.500" width="8" height="8" fill="#fff" stroke="#386090"/><path d="M2.500 14.500L6 11M3 10.500H6.500V14" fill="none" stroke="#184880" stroke-width="1.400"/></svg>간접 이미지</button></li>
        </ul>
      </div>
      <div class="pointer-events-none absolute top-[360px] left-px h-[159px] w-[128px] rounded-xl border-4 border-[#fa0000]"></div>
    </aside>
  </main>

  <!-- status bar -->
  <footer class="flex h-[26px] shrink-0 items-center gap-1 border-t border-[#a0a0a0] pl-1 shadow-[inset_0_1px_0_#fff]">
    <span class="h-[15px] w-[63px] border border-white border-t-[#a0a0a0] border-l-[#a0a0a0]"></span>
    <span class="h-[15px] w-[62px] border border-white border-t-[#a0a0a0] border-l-[#a0a0a0]"></span>
    <span class="h-[15px] w-[98px] border border-white border-t-[#a0a0a0] border-l-[#a0a0a0]"></span>
  </footer>
</div>
</body>
</html>
